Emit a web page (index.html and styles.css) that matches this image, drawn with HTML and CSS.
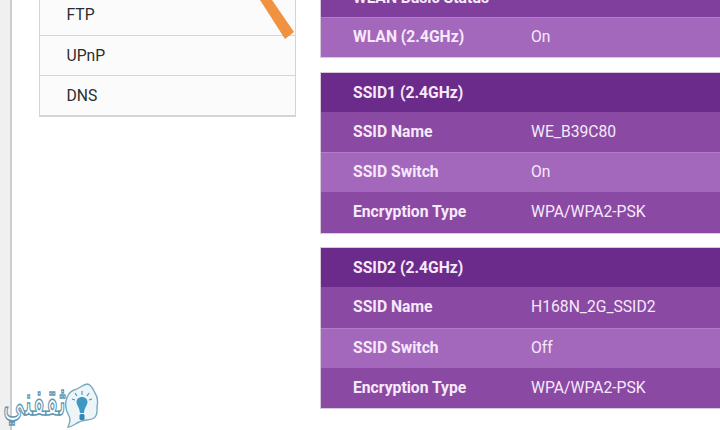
FILE: index.html
```html
<!DOCTYPE html>
<html lang="en">
<head>
  <meta charset="UTF-8">
  <meta name="viewport" content="width=device-width, initial-scale=1.0">
  <title>WLAN Status</title>
  <link rel="stylesheet" href="styles.css">
</head>
<body>
  <div class="page">
    <aside class="sidebar">
      <ul class="side-menu">
        <li>FTP</li>
        <li>UPnP</li>
        <li>DNS</li>
      </ul>
    </aside>

    <main class="content">
      <section class="panel">
        <h2 class="panel-title panel-title-mid">WLAN Basic Status</h2>
        <div class="row row-light"><span class="row-label">WLAN (2.4GHz)</span><span>On</span></div>
      </section>

      <section class="panel">
        <h2 class="panel-title">SSID1 (2.4GHz)</h2>
        <div class="row"><span class="row-label">SSID Name</span><span>WE_B39C80</span></div>
        <div class="row row-light"><span class="row-label">SSID Switch</span><span>On</span></div>
        <div class="row"><span class="row-label">Encryption Type</span><span>WPA/WPA2-PSK</span></div>
      </section>

      <section class="panel">
        <h2 class="panel-title">SSID2 (2.4GHz)</h2>
        <div class="row"><span class="row-label">SSID Name</span><span>H168N_2G_SSID2</span></div>
        <div class="row row-light"><span class="row-label">SSID Switch</span><span>Off</span></div>
        <div class="row"><span class="row-label">Encryption Type</span><span>WPA/WPA2-PSK</span></div>
      </section>
    </main>
  </div>

  <!-- orange arrow shaft drawn over the menu -->
  <svg class="arrow" width="40" height="42" viewBox="0 0 40 42">
    <polygon points="0,0 12,0 34,32 25,39" fill="#f0923f"/>
  </svg>

  <!-- watermark -->
  <div class="watermark">
    <span class="watermark-text" lang="ar" dir="rtl">ثقفني</span>
    <svg class="watermark-icon" width="34" height="46" viewBox="0 0 34 46">
      <path d="M3 44 C5 40 6 37 4 33 C1 28 0 23 1 18 C2 13 4 9 9 7 C14 6 17 2 22 1 C26 1 28 6 30 10 C33 14 33 19 32 24 C32 28 33 32 29 35 C25 38 19 36 14 39 C10 41 7 44 3 44 Z" fill="#eef5f8" stroke="#7aa9c0" stroke-width="1.4"/>
      <path d="M17 14 C13.5 14 11.5 16.5 11.5 19 C11.5 22 14.5 24 15 30 L19 30 C19.5 24 22.5 22 22.5 19 C22.5 16.5 20.5 14 17 14 Z" fill="#3f97c4"/>
      <rect x="14.5" y="31" width="5" height="6" rx="1.5" fill="#2f86b4"/>
      <path d="M17 8 V12 M10 10 L12 13 M24 10 L22 13 M7 16 L10 17 M27 16 L24 17" stroke="#3f97c4" stroke-width="1.1"/>
    </svg>
  </div>
</body>
</html>
```

FILE: styles.css
```css
html {
  height: 100%;
  overflow: hidden;
}
body {
  margin: 0;
  padding: 0;
  height: 100%;
  background: linear-gradient(to right, #f0f0f0 10px, #cdcdcd 10px, #cdcdcd 12px, #fff 12px);
  font-family: Roboto, "Liberation Sans", sans-serif;
  font-size: 15.7px;
  position: relative;
}
.page {
  display: flex;
  align-items: flex-start;
  gap: 24px;
  margin-top: -23px;
  padding-left: 39px;
}
.sidebar {
  width: 257px;
  flex-shrink: 0;
}
.side-menu {
  list-style: none;
  margin: 0;
  padding: 0;
  background: #fbfbfb;
  border: 1px solid #d4d4d4;
  border-top: none;
  border-bottom-width: 2px;
}
.side-menu li {
  height: 39px;
  line-height: 39px;
  padding-left: 26.5px;
  color: #2c2c2c;
  border-top: 1px solid #d4d4d4;
}
.side-menu li:first-child {
  height: 58px;
  line-height: 76px;
  border-top: none;
}
.content {
  flex: 1;
  min-width: 0;
  display: flex;
  flex-direction: column;
  gap: 13.5px;
  margin-right: -1px;
}
.panel {
  background: #8a49a3;
  border: 1px solid #d6cbdc;
  border-right: none;
  color: #f6e9fa;
}
.panel-title {
  margin: 0;
  height: 39px;
  line-height: 39px;
  padding-left: 32px;
  font-size: 15.7px;
  font-weight: 700;
  background: #6b2b8a;
}
.panel-title-mid {
  background: #803f9d;
}
.row {
  display: flex;
  height: 40.33px;
  line-height: 40px;
  padding-left: 32px;
}
.row-light {
  background: #a367bc;
  box-shadow: inset 0 1px 0 rgba(255, 255, 255, 0.15);
}
.row-label {
  width: 178px;
  font-weight: 700;
}
.arrow {
  position: absolute;
  top: 0;
  left: 260px;
}
.watermark {
  position: absolute;
  left: 3px;
  bottom: 1px;
  display: flex;
  align-items: flex-end;
}
.watermark-text {
  font-family: "DejaVu Sans", sans-serif;
  font-size: 26px;
  line-height: 30px;
  color: #fff;
  -webkit-text-stroke: 1px #5f97b3;
  transform: scaleY(1.6);
  transform-origin: bottom;
  margin-bottom: 4px;
  margin-right: -1px;
}
```
